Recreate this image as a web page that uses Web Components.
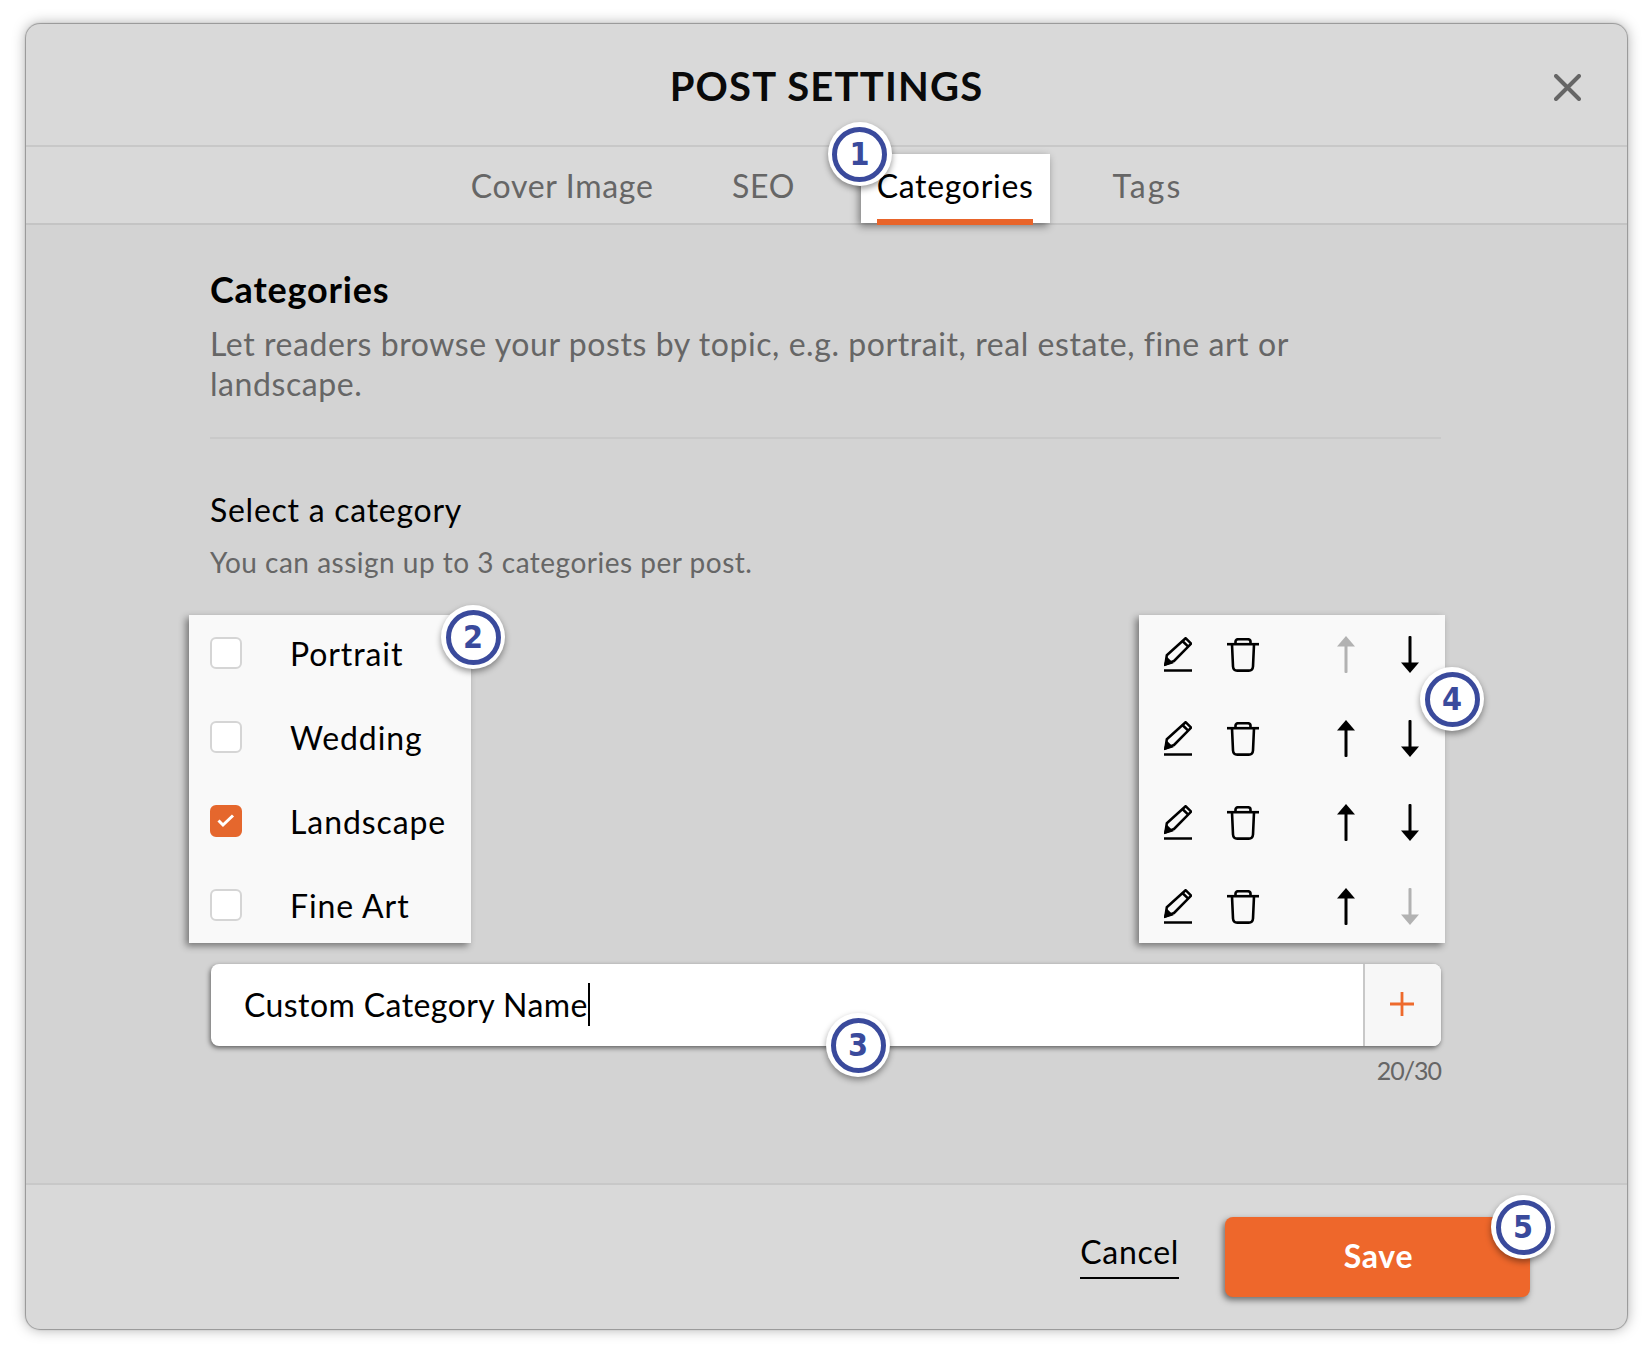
<!doctype html>
<html>
<head>
<meta charset="utf-8">
<title>Post settings</title>
<style>
    html, body { margin: 0; background: #fff; }
    body { min-height: 1354px; font-family: "Lato", "Noto Sans", sans-serif; font-size: 32px; letter-spacing: 0.5px; color: #000; overflow: hidden; }
</style>
</head>
<body>
<post-dialog>
    <dialog-header slot="header">POST SETTINGS</dialog-header>
    <tab-bar slot="tabs">
        <tab-item style="letter-spacing:0.7px">Cover Image</tab-item>
        <tab-item style="letter-spacing:0.7px;margin-left:-3.5px">SEO</tab-item>
        <tab-item active style="letter-spacing:0.7px;margin-left:-0.5px">Categories<call-out style="--x:-1px;--y:0px">1</call-out></tab-item>
        <tab-item style="letter-spacing:2px;margin-left:-3px">Tags</tab-item>
    </tab-bar>
    <category-pane slot="body">
        <category-list>
            <category-row>Portrait</category-row>
            <category-row>Wedding</category-row>
            <category-row checked>Landscape</category-row>
            <category-row>Fine Art</category-row>
            <call-out style="--x:284px;--y:22px">2</call-out>
        </category-list>
        <action-list>
            <action-row no-up></action-row>
            <action-row></action-row>
            <action-row></action-row>
            <action-row no-down></action-row>
            <call-out style="--x:313px;--y:84px">4</call-out>
        </action-list>
        <name-input value="Custom Category Name" count="20/30">
            <call-out style="--x:647px;--y:81px">3</call-out>
        </name-input>
    </category-pane>
    <dialog-footer slot="footer">
        <call-out slot="badge" style="--x:298px;--y:10px">5</call-out>
    </dialog-footer>
</post-dialog>

<script>
const pencilIcon = `
    <svg width="28" height="35" viewBox="0 0 28 35" fill="none" stroke="currentColor" stroke-width="2.5">
        <path d="M0 33.5H28"/>
        <path d="M2.8 18.2L21.6 1.2L27.2 6.6L10 24L1.4 27.4Z" stroke-linejoin="round"/>
        <path d="M1.4 27.4L3.2 21.8L7.2 25.6Z" fill="currentColor"/>
        <path d="M18.4 4L24.2 9.6"/>
    </svg>`
const trashIcon = `
    <svg width="32" height="34" viewBox="0 0 32 34" fill="none" stroke="currentColor" stroke-width="2.6">
        <path d="M0 6.2H32"/>
        <path d="M8.5 6V3.5C8.5 1.8 9.8 1.2 11.5 1.2H20.5C22.2 1.2 23.5 1.8 23.5 3.5V6"/>
        <path d="M5 6.2L6 28.5C6.2 31.2 7.6 32.6 10.2 32.6H21.8C24.4 32.6 25.8 31.2 26 28.5L27 6.2"/>
    </svg>`
const arrowUp = `
    <svg width="18" height="37" viewBox="0 0 18 37" fill="currentColor">
        <path d="M9 0L18 10.5H0Z"/>
        <rect x="7.5" y="8" width="3" height="29" rx="1"/>
    </svg>`
const arrowDown = `
    <svg width="18" height="37" viewBox="0 0 18 37" fill="currentColor">
        <path d="M9 37L18 26.5H0Z"/>
        <rect x="7.5" y="0" width="3" height="29" rx="1"/>
    </svg>`

class PostDialog extends HTMLElement {
    constructor() {
        super()
        this.attachShadow({mode: "open"})
        this.shadowRoot.innerHTML = `
            <style>
                :host {
                    display: flex;
                    flex-direction: column;
                    box-sizing: border-box;
                    width: 1601px;
                    height: 1305px;
                    margin: 24px 0 0 26px;
                    background: #d9d9d9;
                    border-radius: 14px;
                    box-shadow: 0 0 1px 1px rgba(0, 0, 0, 0.3), 0 0 14px rgba(0, 0, 0, 0.35);
                }
                #body { display: block; flex: 1; background: #d3d3d3; }
            </style>
            <slot name="header"></slot>
            <slot name="tabs"></slot>
            <div id="body"><slot name="body"></slot></div>
            <slot name="footer"></slot>`
    }
}

class DialogHeader extends HTMLElement {
    constructor() {
        super()
        this.attachShadow({mode: "open"})
        this.shadowRoot.innerHTML = `
            <style>
                :host {
                    display: grid;
                    grid-template-columns: 1fr auto 1fr;
                    align-items: center;
                    box-sizing: border-box;
                    height: 123px;
                    border-bottom: 2px solid #c8c8c8;
                    padding: 2px 46px 0;
                }
                #title { grid-column: 2; font-size: 40px; font-weight: 700; letter-spacing: 1.2px; color: #0a0a0a; }
                #close { justify-self: end; width: 27px; height: 27px; margin-top: 3px; color: #666; }
            </style>
            <div id="title"><slot></slot></div>
            <svg id="close" viewBox="0 0 27 27" stroke="currentColor" stroke-width="4" stroke-linecap="round">
                <path d="M2 2L25 25M25 2L2 25"/>
            </svg>`
    }
}

class TabBar extends HTMLElement {
    constructor() {
        super()
        this.attachShadow({mode: "open"})
        this.shadowRoot.innerHTML = `
            <style>
                :host {
                    display: flex;
                    justify-content: center;
                    align-items: flex-end;
                    gap: 50px;
                    box-sizing: border-box;
                    height: 78px;
                    border-bottom: 2px solid #c4c4c4;
                }
            </style>
            <slot></slot>`
    }
}

class TabItem extends HTMLElement {
    constructor() {
        super()
        this.attachShadow({mode: "open"})
        this.shadowRoot.innerHTML = `
            <style>
                :host {
                    display: flex;
                    align-items: center;
                    position: relative;
                    height: 69px;
                    padding: 0 16px 6px;
                    box-sizing: border-box;
                    color: #666;
                    white-space: nowrap;
                }
                :host([active]) {
                    color: #000;
                    background: #fff;
                    box-shadow: -2px 3px 8px rgba(0, 0, 0, 0.45);
                }
                :host([active])::after {
                    content: "";
                    position: absolute;
                    left: 16px;
                    right: 17px;
                    bottom: -2px;
                    height: 6px;
                    background: #e8642a;
                }
            </style>
            <slot></slot>`
    }
}

class CategoryPane extends HTMLElement {
    constructor() {
        super()
        this.attachShadow({mode: "open"})
        this.shadowRoot.innerHTML = `
            <style>
                :host { display: block; padding: 42px 186px 0 184px; }
                h2 { margin: 0; font-size: 36px; line-height: 44px; font-weight: 700; letter-spacing: 0.8px; }
                #lead { margin: 13px 0 0; line-height: 40px; color: #666; letter-spacing: 0.57px; }
                hr { margin: 33px 0 0; border: 0; border-top: 2px solid #c9c9c9; }
                h3 { margin: 51px 0 0; font-size: 32px; line-height: 40px; font-weight: 400; letter-spacing: 0.73px; }
                #hint { margin: 14px 0 0; font-size: 28px; line-height: 36px; color: #666; letter-spacing: 0.5px; }
                #lists { display: flex; justify-content: space-between; margin: 35px -4px 0 -21px; }
                ::slotted(name-input) { margin: 21px 0 0 1px; }
            </style>
            <h2>Categories</h2>
            <p id="lead">Let readers browse your posts by topic, e.g. portrait, real estate, fine art or landscape.</p>
            <hr>
            <h3>Select a category</h3>
            <p id="hint">You can assign up to 3 categories per post.</p>
            <div id="lists">
                <slot name="left"></slot>
                <slot name="right"></slot>
            </div>
            <slot></slot>`
    }
    connectedCallback() {
        this.querySelector("category-list").slot = "left"
        this.querySelector("action-list").slot = "right"
    }
}

class CategoryList extends HTMLElement {
    constructor() {
        super()
        this.attachShadow({mode: "open"})
        this.shadowRoot.innerHTML = `
            <style>
                :host {
                    display: flex;
                    flex-direction: column;
                    gap: 8px;
                    position: relative;
                    width: 282px;
                    background: #f9f9f9;
                    box-shadow: -3px 3px 7px rgba(0, 0, 0, 0.45);
                }
            </style>
            <slot></slot>`
    }
}

class CategoryRow extends HTMLElement {
    constructor() {
        super()
        this.attachShadow({mode: "open"})
        const check = this.hasAttribute("checked")
            ? `<svg width="28" height="28" viewBox="0 0 28 28" fill="none" stroke="#fff" stroke-width="3"><path d="M6.5 13.5L11 18L21 8.5"/></svg>`
            : ""
        this.shadowRoot.innerHTML = `
            <style>
                :host {
                    display: flex;
                    align-items: center;
                    gap: 48px;
                    height: 76px;
                    padding-left: 21px;
                    white-space: nowrap;
                    letter-spacing: 0.9px;
                }
                #box {
                    display: flex;
                    box-sizing: border-box;
                    width: 32px;
                    height: 32px;
                    background: #fff;
                    border: 2px solid #d5d5d5;
                    border-radius: 6px;
                }
                :host([checked]) #box { background: #e5672d; border-color: #e5672d; }
            </style>
            <div id="box">${check}</div>
            <span><slot></slot></span>`
    }
}

class ActionList extends HTMLElement {
    constructor() {
        super()
        this.attachShadow({mode: "open"})
        this.shadowRoot.innerHTML = `
            <style>
                :host {
                    display: flex;
                    flex-direction: column;
                    gap: 8px;
                    position: relative;
                    width: 306px;
                    background: #f9f9f9;
                    box-shadow: -3px 3px 7px rgba(0, 0, 0, 0.45);
                }
            </style>
            <slot></slot>`
    }
}

class ActionRow extends HTMLElement {
    constructor() {
        super()
        this.attachShadow({mode: "open"})
        this.shadowRoot.innerHTML = `
            <style>
                :host {
                    display: flex;
                    align-items: center;
                    box-sizing: border-box;
                    height: 76px;
                    padding: 3px 0 0 25px;
                    color: #000;
                }
                svg { display: block; }
                #delete { margin-left: 35px; }
                #up { margin-left: 78px; }
                #down { margin-left: 46px; }
                :host([no-up]) #up, :host([no-down]) #down { color: #b2b2b2; }
            </style>
            <div>${pencilIcon}</div>
            <div id="delete">${trashIcon}</div>
            <div id="up">${arrowUp}</div>
            <div id="down">${arrowDown}</div>`
    }
}

class NameInput extends HTMLElement {
    constructor() {
        super()
        this.attachShadow({mode: "open"})
        this.shadowRoot.innerHTML = `
            <style>
                :host { display: block; }
                #field {
                    display: flex;
                    position: relative;
                    height: 82px;
                    background: #fff;
                    border-radius: 8px;
                    box-shadow: -1px 2px 5px rgba(0, 0, 0, 0.55);
                }
                #text {
                    flex: 1;
                    display: flex;
                    align-items: center;
                    padding: 0 0 2px 33px;
                    letter-spacing: 0.42px;
                    white-space: nowrap;
                }
                #caret { width: 2px; height: 43px; background: #000; }
                #add {
                    display: flex;
                    align-items: center;
                    justify-content: center;
                    box-sizing: border-box;
                    width: 78px;
                    padding: 0 2px 2px 0;
                    background: #f7f7f7;
                    border-left: 2px solid #c8c8c8;
                    border-radius: 0 8px 8px 0;
                }
                #count {
                    margin-top: 8px;
                    font-size: 25px;
                    line-height: 32px;
                    text-align: right;
                    color: #666;
                    letter-spacing: -1px;
                }
            </style>
            <div id="field">
                <div id="text"><span id="value"></span><div id="caret"></div></div>
                <div id="add">
                    <svg width="24" height="24" viewBox="0 0 24 24" stroke="#ee6a2c" stroke-width="2.8"><path d="M12 0V24M0 12H24"/></svg>
                </div>
                <slot></slot>
            </div>
            <div id="count"></div>`
    }
    connectedCallback() {
        this.shadowRoot.querySelector("#value").textContent = this.getAttribute("value")
        this.shadowRoot.querySelector("#count").textContent = this.getAttribute("count")
    }
}

class DialogFooter extends HTMLElement {
    constructor() {
        super()
        this.attachShadow({mode: "open"})
        this.shadowRoot.innerHTML = `
            <style>
                :host {
                    display: flex;
                    justify-content: flex-end;
                    align-items: flex-start;
                    gap: 46px;
                    box-sizing: border-box;
                    height: 146px;
                    padding: 32px 97px 0 0;
                    border-top: 2px solid #c8c8c8;
                    border-radius: 0 0 14px 14px;
                }
                #cancel {
                    margin-top: 15px;
                    line-height: 40px;
                    padding-bottom: 5px;
                    border-bottom: 2px solid #000;
                    letter-spacing: 0.7px;
                }
                #save {
                    position: relative;
                    display: flex;
                    align-items: center;
                    justify-content: center;
                    box-sizing: border-box;
                    width: 305px;
                    height: 80px;
                    padding: 0 0 3px 2px;
                    background: #ee672b;
                    color: #fff;
                    font-weight: 700;
                    letter-spacing: 0.7px;
                    border-radius: 8px;
                    box-shadow: -2px 3px 6px rgba(0, 0, 0, 0.5);
                }
            </style>
            <div id="cancel">Cancel</div>
            <div id="save">Save<slot name="badge"></slot></div>`
    }
}

class CallOut extends HTMLElement {
    constructor() {
        super()
        this.attachShadow({mode: "open"})
        this.shadowRoot.innerHTML = `
            <style>
                :host {
                    position: absolute;
                    left: calc(var(--x) - 32px);
                    top: calc(var(--y) - 32px);
                    z-index: 5;
                    display: flex;
                    align-items: center;
                    justify-content: center;
                    width: 64px;
                    height: 64px;
                    background: #fff;
                    border-radius: 50%;
                    box-shadow: 0 3px 6px rgba(0, 0, 0, 0.4);
                }
                #ring {
                    display: flex;
                    align-items: center;
                    justify-content: center;
                    box-sizing: border-box;
                    width: 55px;
                    height: 55px;
                    border: 5.5px solid #3a4a9c;
                    border-radius: 50%;
                    color: #3a4a9c;
                    font: 700 32px/1 "Liberation Sans Narrow", "DejaVu Sans Condensed", sans-serif;
                    letter-spacing: 0;
                }
            </style>
            <div id="ring"><slot></slot></div>`
    }
}

customElements.define("post-dialog", PostDialog)
customElements.define("dialog-header", DialogHeader)
customElements.define("tab-bar", TabBar)
customElements.define("tab-item", TabItem)
customElements.define("category-pane", CategoryPane)
customElements.define("category-list", CategoryList)
customElements.define("category-row", CategoryRow)
customElements.define("action-list", ActionList)
customElements.define("action-row", ActionRow)
customElements.define("name-input", NameInput)
customElements.define("dialog-footer", DialogFooter)
customElements.define("call-out", CallOut)
</script>
</body>
</html>
